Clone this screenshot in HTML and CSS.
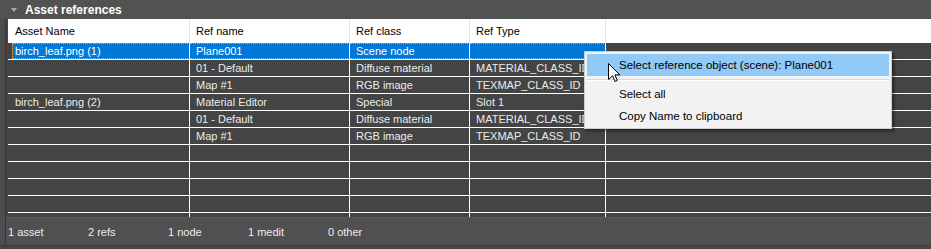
FILE: index.html
```html
<!DOCTYPE html>
<html lang="en">
<head>
    <meta charset="UTF-8">
    <title>Asset references</title>
    <link rel="stylesheet" href="styles.css">
</head>
<body>
    <div class="titlebar">
        <span class="arrow"></span>
        <span class="title">Asset references</span>
    </div>

    <div class="panel">
        <div class="gutter"></div>
        <div class="main">
            <div class="grid">
                <div class="row head">
                    <div class="rh"></div>
                    <div class="c c1">Asset Name</div>
                    <div class="c c2">Ref name</div>
                    <div class="c c3">Ref class</div>
                    <div class="c c4">Ref Type</div>
                    <div class="c c5"></div>
                </div>
                <div class="row selected">
                    <div class="rh"></div>
                    <div class="c c1">birch_leaf.png (1)</div>
                    <div class="c c2">Plane001</div>
                    <div class="c c3">Scene node</div>
                    <div class="c c4"></div>
                    <div class="c c5"></div>
                </div>
                <div class="row">
                    <div class="rh"></div>
                    <div class="c c1"></div>
                    <div class="c c2">01 - Default</div>
                    <div class="c c3">Diffuse material</div>
                    <div class="c c4">MATERIAL_CLASS_ID</div>
                    <div class="c c5"></div>
                </div>
                <div class="row">
                    <div class="rh"></div>
                    <div class="c c1"></div>
                    <div class="c c2">Map #1</div>
                    <div class="c c3">RGB image</div>
                    <div class="c c4">TEXMAP_CLASS_ID</div>
                    <div class="c c5"></div>
                </div>
                <div class="row">
                    <div class="rh"></div>
                    <div class="c c1">birch_leaf.png (2)</div>
                    <div class="c c2">Material Editor</div>
                    <div class="c c3">Special</div>
                    <div class="c c4">Slot 1</div>
                    <div class="c c5"></div>
                </div>
                <div class="row">
                    <div class="rh"></div>
                    <div class="c c1"></div>
                    <div class="c c2">01 - Default</div>
                    <div class="c c3">Diffuse material</div>
                    <div class="c c4">MATERIAL_CLASS_ID</div>
                    <div class="c c5"></div>
                </div>
                <div class="row">
                    <div class="rh"></div>
                    <div class="c c1"></div>
                    <div class="c c2">Map #1</div>
                    <div class="c c3">RGB image</div>
                    <div class="c c4">TEXMAP_CLASS_ID</div>
                    <div class="c c5"></div>
                </div>
                <div class="row"><div class="rh"></div><div class="c c1"></div><div class="c c2"></div><div class="c c3"></div><div class="c c4"></div><div class="c c5"></div></div>
                <div class="row"><div class="rh"></div><div class="c c1"></div><div class="c c2"></div><div class="c c3"></div><div class="c c4"></div><div class="c c5"></div></div>
                <div class="row"><div class="rh"></div><div class="c c1"></div><div class="c c2"></div><div class="c c3"></div><div class="c c4"></div><div class="c c5"></div></div>
                <div class="row"><div class="rh"></div><div class="c c1"></div><div class="c c2"></div><div class="c c3"></div><div class="c c4"></div><div class="c c5"></div></div>
                <div class="row"><div class="rh"></div><div class="c c1"></div><div class="c c2"></div><div class="c c3"></div><div class="c c4"></div><div class="c c5"></div></div>
            </div>
            <div class="status">
                <span>1 asset</span>
                <span>2 refs</span>
                <span>1 node</span>
                <span>1 medit</span>
                <span>0 other</span>
            </div>
        </div>
    </div>
    <div class="footer"></div>

    <!-- right-click menu over the grid -->
    <div class="menu">
        <div class="item active">Select reference object (scene): Plane001</div>
        <div class="sep"></div>
        <div class="item">Select all</div>
        <div class="item">Copy Name to clipboard</div>
    </div>

    <svg class="cursor" width="13" height="20" viewBox="0 0 13 20">
        <path d="M0.5 0.5 L0.5 16.5 L4.5 12.8 L7 18.5 L9.3 17.5 L6.9 11.9 L11.8 11.9 Z" fill="#fff" stroke="#000" stroke-width="1" stroke-linejoin="miter"/>
    </svg>
</body>
</html>
```

FILE: styles.css
```css
body {
    margin: 0;
    width: 931px;
    height: 249px;
    overflow: hidden;
    background: #474747;
    font-family: "Liberation Sans", Arial, sans-serif;
    font-size: 11px;
    color: #ececec;
}
.titlebar {
    height: 19px;
    background: #525252;
    display: flex;
    align-items: center;
}
.arrow {
    width: 0;
    height: 0;
    margin-left: 11px;
    margin-right: 8px;
    border-left: 3.5px solid transparent;
    border-right: 3.5px solid transparent;
    border-top: 4px solid #a8a8a8;
}
.title {
    font-weight: bold;
    font-size: 12px;
    color: #fff;
}
.panel {
    display: flex;
    height: 226px;
}
.gutter {
    width: 5px;
    background: #4d4d4d;
    border-right: 1px solid #363636;
}
.main {
    flex: 1;
    display: flex;
    flex-direction: column;
}
.grid {
    height: 198px;
    overflow: hidden;
    background: #444;
    padding-left: 2px;
}
.row {
    display: flex;
    height: 16px;
    border-bottom: 1px solid #fff;
}
.row.head {
    height: 24px;
    border-bottom: none;
    background: #fff;
    color: #000;
}
.rh {
    width: 4px;
    flex: none;
}
.c {
    flex: none;
    box-sizing: border-box;
    border-right: 1px solid #fff;
    padding-left: 6px;
    white-space: nowrap;
    overflow: hidden;
    line-height: 16px;
}
.head .c {
    line-height: 24px;
    border-right-color: #e2e2e2;
}
.c1 { width: 178px; padding-left: 3px; }
.c2 { width: 160px; }
.c3 { width: 120px; }
.c4 { width: 136px; }
.c5 { flex: 1; border-right: none; }
.selected .c1,
.selected .c2,
.selected .c3,
.selected .c4 {
    background: #0078d7;
    color: #fff;
    border-top: 1px dotted #f0a64a;
    border-bottom: 1px dotted #f0a64a;
    line-height: 14px;
}
.selected .c1 {
    border-left: 1px dotted #f0a64a;
    padding-left: 2px;
}
.status {
    height: 27px;
    background: #505050;
    border-top: 1px solid #5b5b5b;
    display: flex;
    align-items: center;
    padding-left: 2px;
}
.status span {
    width: 80px;
}
.footer {
    height: 4px;
    background: #464646;
    border-top: 1px solid #3a3a3a;
}
.menu {
    position: absolute;
    left: 584px;
    top: 51px;
    width: 302px;
    padding: 2px 2px 1px;
    background: #f2f2f2;
    border: 1px solid #cdcdcd;
    box-shadow: 2px 2px 3px rgba(0, 0, 0, 0.45);
    color: #000;
    font-size: 11.5px;
}
.item {
    height: 22px;
    line-height: 22px;
    padding-left: 32px;
}
.item.active {
    background: #91c9f7;
}
.sep {
    height: 7px;
    display: flex;
    align-items: center;
}
.sep::before {
    content: "";
    flex: 1;
    height: 1px;
    background: #d7d7d7;
    border-bottom: 1px solid #fff;
}
.cursor {
    position: absolute;
    left: 608px;
    top: 63px;
}
```
